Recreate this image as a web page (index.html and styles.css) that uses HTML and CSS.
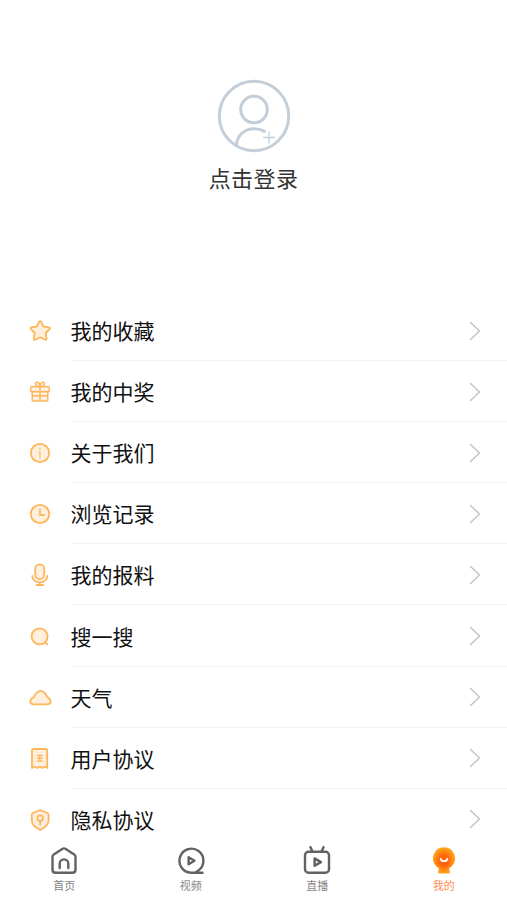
FILE: index.html
```html
<!DOCTYPE html>
<html lang="zh-CN">
<head>
    <meta charset="UTF-8">
    <meta name="viewport" content="width=device-width, initial-scale=1.0">
    <title>我的</title>
    <link rel="stylesheet" href="styles.css">
</head>
<body>
    <header class="profile">
        <svg class="avatar" viewBox="0 0 74 74">
            <circle cx="37" cy="37" r="34.7" />
            <circle cx="37" cy="30.5" r="13.3" />
            <path d="M19.500 65.500c1-9.500 8-15.700 17.500-15.700 4 0 7.200.8 10.300 2.600" />
            <path class="plus" d="M46.500 58.500h11M52 53v11" />
        </svg>
        <div class="login">点击登录</div>
    </header>

    <main class="menu">
        <a class="row">
            <svg class="icon" viewBox="0 0 24 24"><path d="M11.200 2.800q1-1.500 2 0l2.400 4.700 5.300.9q1.700.4.600 1.700l-3.800 3.900.8 5.700q.1 1.600-1.400 1l-4.900-2.500-4.900 2.500q-1.500.6-1.400-1l.8-5.700-3.800-3.900Q1.800 8.800 3.500 8.400l5.300-.9z" /></svg>
            <div class="cell"><span>我的收藏</span><svg class="arrow" viewBox="0 0 12 20"><path d="M1.500 1.500l9 8.500-9 8.500" /></svg></div>
        </a>
        <a class="row">
            <svg class="icon thin" viewBox="0 0 24 24"><path d="M3.500 6.700h17q.8 0 .8.800v4.200H2.700V7.500q0-.8.800-.8zM4.200 11.700h15.600v8.500q0 .8-.8.800H5q-.8 0-.8-.8zM12 6.700V21M4.200 15.700h15.600M12 6.700C6.500 6.500 6.500 2.200 9 2.200c2 0 3 2 3 4.500 0-2.500 1-4.500 3-4.500 2.500 0 2.500 4.300-3 4.500z" /></svg>
            <div class="cell"><span>我的中奖</span><svg class="arrow" viewBox="0 0 12 20"><path d="M1.500 1.500l9 8.500-9 8.500" /></svg></div>
        </a>
        <a class="row">
            <svg class="icon" viewBox="0 0 24 24"><circle cx="12" cy="12" r="9.200" /><path class="pale" d="M12 7.300v.7M11.300 11h.7v5.500" /></svg>
            <div class="cell"><span>关于我们</span><svg class="arrow" viewBox="0 0 12 20"><path d="M1.500 1.500l9 8.500-9 8.500" /></svg></div>
        </a>
        <a class="row">
            <svg class="icon" viewBox="0 0 24 24"><circle cx="12" cy="12" r="9.200" /><path class="line" d="M12 7.500V13h4" /></svg>
            <div class="cell"><span>浏览记录</span><svg class="arrow" viewBox="0 0 12 20"><path d="M1.500 1.500l9 8.500-9 8.500" /></svg></div>
        </a>
        <a class="row">
            <svg class="icon" viewBox="0 0 24 24"><rect x="7.200" y="1.300" width="9" height="15" rx="4.500" /><path class="line" d="M4.300 13c0 4 3.500 6.300 7.500 6.300s7.500-2.300 7.500-6.300M11.800 19.500V22M8.500 22h6.600" /></svg>
            <div class="cell"><span>我的报料</span><svg class="arrow" viewBox="0 0 12 20"><path d="M1.500 1.500l9 8.500-9 8.500" /></svg></div>
        </a>
        <a class="row">
            <svg class="icon" viewBox="0 0 24 24"><circle cx="11.600" cy="11.400" r="8" /><path class="line" d="M17 17.300l2.300 2" /></svg>
            <div class="cell"><span>搜一搜</span><svg class="arrow" viewBox="0 0 12 20"><path d="M1.500 1.500l9 8.500-9 8.500" /></svg></div>
        </a>
        <a class="row">
            <svg class="icon" viewBox="0 0 24 24"><path d="M6 18.300c-2.300 0-3.700-1.200-3.700-3 0-1.900 1.300-2.900 3.200-4C7 8.500 9 4.800 12.500 4.800s5.700 3.600 7 6.500c1.900 1 3.200 2.200 3.200 4 0 1.800-1.400 3-3.700 3z" /></svg>
            <div class="cell"><span>天气</span><svg class="arrow" viewBox="0 0 12 20"><path d="M1.500 1.500l9 8.500-9 8.500" /></svg></div>
        </a>
        <a class="row">
            <svg class="icon" viewBox="0 0 24 24"><path d="M5.500 2h12q1.700 0 1.700 1.700v17.200l-2.500-1.200-2.500 1.200-2.600-1.200L9 20.900l-2.500-1.200L4 20.900V3.700Q4 2 5.500 2z" /><path class="line small" d="M9.300 8.500h5M9.300 11.300h5M9.300 14.100h5M11.800 8.500v5.600" /></svg>
            <div class="cell"><span>用户协议</span><svg class="arrow" viewBox="0 0 12 20"><path d="M1.500 1.500l9 8.500-9 8.500" /></svg></div>
        </a>
        <a class="row">
            <svg class="icon" viewBox="0 0 24 24"><path d="M12.200 2l7.200 3q1.200.5 1.200 1.700v5.500c0 4.300-3.500 7.300-8.400 9.700-4.900-2.400-8.400-5.400-8.400-9.700V6.700Q3.800 5.500 5 5z" /><circle cx="12.200" cy="10.200" r="2.800" /><path class="line" d="M12.200 13v3.500" /></svg>
            <div class="cell"><span>隐私协议</span><svg class="arrow" viewBox="0 0 12 20"><path d="M1.500 1.500l9 8.500-9 8.500" /></svg></div>
        </a>
    </main>

    <nav class="tabbar">
        <a class="tab">
            <svg viewBox="0 0 30 30"><path d="M13.600 2.800L4.800 8.600q-1.300.9-1.300 2.400v12.700q0 3 3 3h17q3 0 3-3V11q0-1.500-1.300-2.400l-8.800-5.800q-1.400-.9-2.800 0z" /><path d="M10.700 22v-4.300a4.300 4.300 0 0 1 8.600 0V22" /></svg>
            <span>首页</span>
        </a>
        <a class="tab">
            <svg viewBox="0 0 30 30"><path d="M26.500 26.700H15A12 12 0 1 1 22.500 24.400L19.800 26.300" /><path d="M12.600 11.200v7l5.900-3.500z" /></svg>
            <span>视频</span>
        </a>
        <a class="tab">
            <svg viewBox="0 0 30 30"><rect x="3" y="5.700" width="24" height="21" rx="3.500" /><path d="M8.500 1.200L10.200 5M21.500 1.200L19.800 5M12.600 12.400v7.400l6.300-3.700z" /></svg>
            <span>直播</span>
        </a>
        <a class="tab active">
            <svg viewBox="0 0 30 30">
                <defs>
                    <radialGradient id="flame">
                        <stop offset="0.4" stop-color="#ff650c" />
                        <stop offset="1" stop-color="#ffa719" />
                    </radialGradient>
                </defs>
                <path class="mascot" d="M15 1.300a11.100 11.100 0 0 0-7.300 19.400l2.300 1.500-.9 3.800q-.2 1.600 1.400 1.600h9q1.600 0 1.400-1.600l-.9-3.800 2.300-1.500A11.100 11.100 0 0 0 15 1.300z" />
                <path class="smile" d="M11.700 12.800c.5 3.200 6.100 3.200 6.600 0" />
            </svg>
            <span>我的</span>
        </a>
    </nav>
</body>
</html>
```
FILE: styles.css
```css
* {
    box-sizing: border-box;
}
body {
    margin: 0;
    height: 900px;
    display: flex;
    flex-direction: column;
    overflow: hidden;
    background: #fff;
    font-family: "Noto Sans CJK SC", sans-serif;
    color: #111;
}
svg {
    display: block;
    fill: none;
    stroke-linecap: round;
    stroke-linejoin: round;
}
.profile {
    flex: none;
    height: 300px;
    padding-top: 79px;
    display: flex;
    flex-direction: column;
    align-items: center;
}
.avatar {
    width: 74px;
    height: 74px;
    stroke: #c3ced9;
    stroke-width: 3;
}
.avatar .plus {
    stroke-width: 1.3;
}
.login {
    margin-top: 7px;
    font-size: 22px;
    line-height: 34px;
    letter-spacing: 0.4px;
    color: #333;
}
.menu {
    flex: none;
    height: 540px;
    overflow: hidden;
}
.row {
    height: 61.1px;
    padding-left: 28px;
    display: flex;
    align-items: center;
}
.icon {
    width: 24px;
    height: 24px;
    margin-top: 1px;
    fill: #ffefdc;
    stroke: #fcb65c;
    stroke-width: 1.8;
}
.icon.thin {
    stroke-width: 1.4;
}
.icon .line {
    fill: none;
}
.icon .small {
    stroke-width: 1.3;
}
.icon .pale {
    fill: none;
    stroke: #fbc98b;
}
.cell {
    flex: 1;
    height: 100%;
    margin-left: 18.5px;
    padding-right: 26px;
    display: flex;
    align-items: center;
    justify-content: space-between;
    border-bottom: 1px solid #f3f3f3;
    font-size: 21px;
    line-height: 30px;
}
.arrow {
    width: 12px;
    height: 20px;
    margin-top: 1px;
    stroke: #c4c4c4;
    stroke-width: 1.5;
}
.row:last-child .cell {
    border-bottom-color: transparent;
}
.tabbar {
    flex: none;
    height: 60px;
    padding-left: 1px;
    display: flex;
    background: #fff;
}
.tab {
    flex: 1;
    padding-top: 6px;
    display: flex;
    flex-direction: column;
    align-items: center;
    font-size: 11px;
    line-height: 16px;
    color: #858585;
}
.tab svg {
    width: 30px;
    height: 30px;
    margin-bottom: 1px;
    stroke: #626262;
    stroke-width: 2.4;
}
.tab.active {
    color: #ff8c55;
}
.tab .mascot {
    fill: url(#flame);
    stroke: none;
}
.tab .smile {
    stroke: #fff;
    stroke-width: 1.8;
}
```
